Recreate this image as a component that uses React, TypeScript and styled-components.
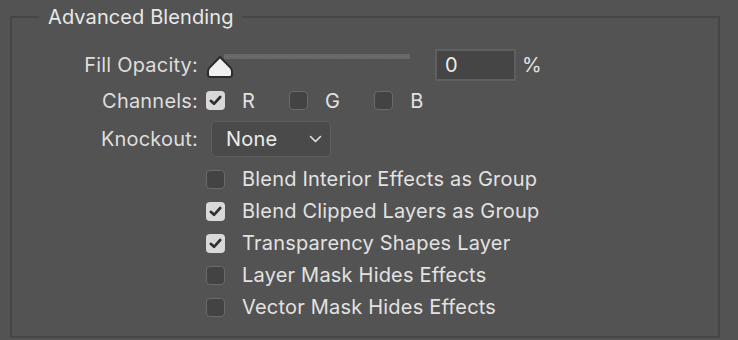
import React from 'react';
import styled, { createGlobalStyle } from 'styled-components';

const GlobalStyle = createGlobalStyle`
  html, body {
    margin: 0;
    padding: 0;
    background: #535353;
  }
  body {
    width: 738px;
    height: 340px;
    overflow: hidden;
    font-family: Inter, "Noto Sans", "Liberation Sans", sans-serif;
    color: #e2e2e2;
    letter-spacing: 0.2px;
  }
`;

const Frame = styled.fieldset`
  box-sizing: border-box;
  margin: 5px 0 0 10px;
  width: 710px;
  height: 333px;
  padding: 20px 0 0 0;
  border: 2px solid #464646;
  min-width: 0;
`;

const Title = styled.legend`
  margin-left: 27px;
  padding: 0 8px 0 9px;
  font-size: 20px;
  line-height: 24px;
  letter-spacing: 0.1px;
  color: #e8e8e8;
`;

const Row = styled.div<{ $top: number; $height: number }>`
  display: flex;
  align-items: center;
  margin-top: ${({ $top }) => $top}px;
  height: ${({ $height }) => $height}px;
`;

const Label = styled.span`
  width: 186px;
  text-align: right;
  font-size: 20px;
  color: #dedede;
  flex-shrink: 0;
`;

const Controls = styled.div`
  display: flex;
  align-items: center;
  margin-left: 8px;
  height: 100%;
`;

const Slider = styled.div`
  position: relative;
  width: 205px;
  height: 24px;
  align-self: flex-start;
  margin-top: 5px;
`;

const Track = styled.div`
  margin-left: 18px;
  width: 186px;
  height: 5px;
  background: repeating-linear-gradient(
      to right,
      #747474 0 1px,
      #686868 1px 3px
    )
    center / 100% 1px no-repeat,
    #686868;
`;

const Thumb = styled.svg`
  position: absolute;
  left: 0;
  top: 1px;
`;

const NumberBox = styled.div`
  box-sizing: border-box;
  margin-left: 24px;
  width: 81px;
  height: 32px;
  padding-left: 8px;
  display: flex;
  align-items: center;
  background: #454545;
  border: 2px solid #5f5f5f;
  font-size: 20px;
  color: #ececec;
`;

const Unit = styled.span`
  margin-left: 6px;
  font-size: 20px;
  color: #e2e2e2;
`;

const Channel = styled.label`
  display: flex;
  align-items: center;
  gap: 17px;
  margin-right: 34px;
  font-size: 20px;
  color: #e2e2e2;
`;

const Box = styled.span<{ $checked?: boolean }>`
  box-sizing: border-box;
  width: 19px;
  height: 19px;
  border-radius: 4px;
  display: inline-flex;
  align-items: center;
  justify-content: center;
  flex-shrink: 0;
  background: ${({ $checked }) => ($checked ? '#d9d9d9' : '#434343')};
  border: ${({ $checked }) => ($checked ? 'none' : '1.5px solid #6a6a6a')};
`;

const Select = styled.div`
  box-sizing: border-box;
  margin-left: 5px;
  width: 120px;
  height: 36px;
  border-radius: 5px;
  border: 1.5px solid #5e5e5e;
  background: #4a4a4a;
  display: flex;
  align-items: center;
  justify-content: space-between;
  padding: 0 8px 0 14px;
  font-size: 20px;
  color: #ececec;
`;

const OptionList = styled.div`
  display: flex;
  flex-direction: column;
  margin: 6px 0 0 194px;
`;

const Option = styled.label`
  display: flex;
  align-items: center;
  gap: 17px;
  height: 32px;
  font-size: 20px;
  color: #e2e2e2;
`;

const Check = () => (
  <svg width="13" height="11" viewBox="0 0 13 11">
    <path
      d="M1.8 5.8 L5 8.8 L11.2 2"
      fill="none"
      stroke="#2e2e2e"
      strokeWidth="2.6"
      strokeLinecap="round"
      strokeLinejoin="round"
    />
  </svg>
);

const Checkbox = ({ checked }: { checked?: boolean }) => (
  <Box $checked={checked}>{checked && <Check />}</Box>
);

const options = [
  { label: 'Blend Interior Effects as Group', checked: false },
  { label: 'Blend Clipped Layers as Group', checked: true },
  { label: 'Transparency Shapes Layer', checked: true },
  { label: 'Layer Mask Hides Effects', checked: false },
  { label: 'Vector Mask Hides Effects', checked: false },
];

export default function App() {
  return (
    <>
      <GlobalStyle />
      <Frame>
        <Title>Advanced Blending</Title>

        <Row $top={0} $height={32}>
          <Label>Fill Opacity:</Label>
          <Controls>
            <Slider>
              <Track />
              <Thumb width="28" height="24" viewBox="0 0 28 24">
                <path
                  d="M14 2 L24.4 12.6 Q26 14.2 26 16.4 L26 19.5 Q26 22 23.5 22 L4.5 22 Q2 22 2 19.5 L2 16.4 Q2 14.2 3.6 12.6 Z"
                  fill="#f0f0f0"
                  stroke="#2b2b2b"
                  strokeWidth="2"
                  strokeLinejoin="round"
                />
              </Thumb>
            </Slider>
            <NumberBox>0</NumberBox>
            <Unit>%</Unit>
          </Controls>
        </Row>

        <Row $top={10} $height={19}>
          <Label>Channels:</Label>
          <Controls>
            <Channel>
              <Checkbox checked />R
            </Channel>
            <Channel>
              <Checkbox />G
            </Channel>
            <Channel>
              <Checkbox />B
            </Channel>
          </Controls>
        </Row>

        <Row $top={11} $height={36}>
          <Label>Knockout:</Label>
          <Controls>
            <Select>
              None
              <svg width="13" height="8" viewBox="0 0 13 8">
                <path
                  d="M1.5 1.5 L6.5 6.5 L11.5 1.5"
                  fill="none"
                  stroke="#e0e0e0"
                  strokeWidth="1.6"
                  strokeLinecap="round"
                  strokeLinejoin="round"
                />
              </svg>
            </Select>
          </Controls>
        </Row>

        <OptionList>
          {options.map((o) => (
            <Option key={o.label}>
              <Checkbox checked={o.checked} />
              {o.label}
            </Option>
          ))}
        </OptionList>
      </Frame>
    </>
  );
}
